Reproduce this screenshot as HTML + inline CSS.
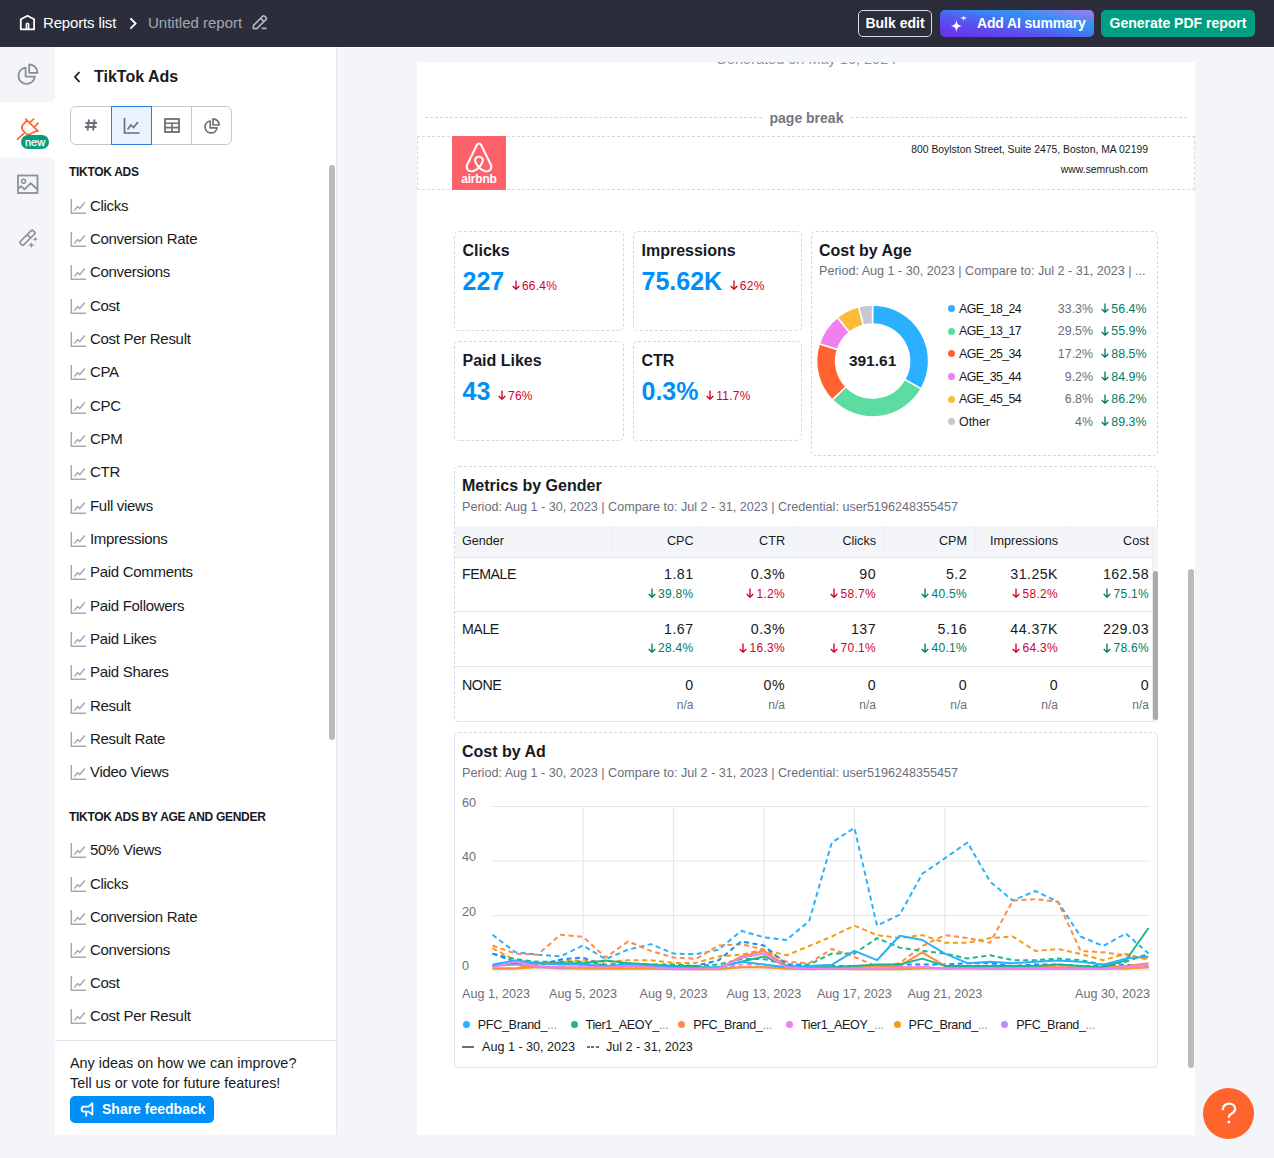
<!DOCTYPE html>
<html><head><meta charset="utf-8">
<style>
*{box-sizing:border-box;margin:0;padding:0}
html,body{width:1274px;height:1158px;overflow:hidden;background:#f4f5f9;font-family:"Liberation Sans",sans-serif;color:#171a22}
.abs{position:absolute}
#top{position:absolute;left:0;top:0;width:1274px;height:47px;background:#2b2e3a;z-index:5}
#rail{position:absolute;left:0;top:46px;width:55px;height:1112px;background:#f4f5f9}
#panel{position:absolute;left:55px;top:46px;width:282px;height:1089px;background:#fff;border-right:1px solid #e6e7ed}
.li{position:absolute;left:15px;height:20px;font-size:15px;line-height:20px;color:#171a22;white-space:nowrap;letter-spacing:-0.3px}
.li svg{position:absolute;left:0;top:2px}
.li span{position:absolute;left:20px;top:0}
.sech{position:absolute;left:14px;font-size:12px;font-weight:bold;color:#171a22;letter-spacing:-0.3px;white-space:nowrap}
#page{position:absolute;left:417px;top:62px;width:778px;height:1073px;background:#fff;overflow:hidden}
.card{position:absolute;border:1px dashed #d5d7df;border-radius:5px}
.ttl{position:absolute;font-size:16px;font-weight:bold;white-space:nowrap;color:#171a22}
.sub{position:absolute;font-size:13px;color:#6c6e79;white-space:nowrap}
.big{position:absolute;font-size:25px;font-weight:bold;color:#008ff8;white-space:nowrap}
.red{color:#d1002f}
.grn{color:#007c65}
.chg{position:absolute;font-size:12px;white-space:nowrap}
.t{position:absolute;white-space:nowrap}
</style></head><body>

<div id="top">
<svg class="abs" style="left:0;top:0" width="50" height="47" viewBox="0 0 50 47"><path d="M20.8 29.3V19.2L27.5 15.8L34.1 19.2V29.3Z" fill="none" stroke="#fff" stroke-width="1.8" stroke-linejoin="round"/><path d="M26.4 29.3V24.4a1.1 1.1 0 0 1 2.2 0V29.3" fill="none" stroke="#fff" stroke-width="1.6"/></svg>
<div class="t" style="left:43px;top:14px;font-size:15px;line-height:17px;color:#fff;letter-spacing:-0.15px">Reports list</div>
<svg class="abs" style="left:0;top:0" width="150" height="47" viewBox="0 0 150 47"><path d="M131 19L135.6 23.5L131 28" fill="none" stroke="#fff" stroke-width="1.8" stroke-linecap="square"/></svg>
<div class="t" style="left:148px;top:14px;font-size:15px;line-height:17px;color:#a4a7b3">Untitled report</div>
<svg class="abs" style="left:240px;top:0" width="40" height="47" viewBox="240 0 40 47"><path d="M253.3 28.5L253.5 25.4L262.8 16.1a1.2 1.2 0 0 1 1.7 0L266.1 17.7a1.2 1.2 0 0 1 0 1.7L256.8 28.7Z" fill="none" stroke="#b0b3c0" stroke-width="1.7" stroke-linejoin="round"/><path d="M260.7 18.3L264 21.6M261.6 28.4H266.6" fill="none" stroke="#b0b3c0" stroke-width="1.7"/></svg>
<div class="abs" style="left:858px;top:10px;width:74px;height:27px;border:1px solid #d9dbe3;border-radius:5px;color:#fff;font-size:14px;font-weight:bold;line-height:25px;text-align:center">Bulk edit</div>
<div class="abs" style="left:940px;top:10px;width:154px;height:27px;border-radius:5px;background:linear-gradient(to top right,#6a2ef0 0%,#5b50f0 35%,#3b82f2 58%,#3590f2 70%,#8a7eee 92%,#a878ec 100%);color:#fff;font-size:14px;letter-spacing:-0.15px;font-weight:bold;line-height:27px">
<svg class="abs" style="left:0;top:0" width="40" height="27" viewBox="0 0 40 27"><path d="M16.4 9.6C17 14 17.6 15.2 22.4 16.1 17.6 17 17 18.2 16.4 22.6 15.8 18.2 15.2 17 10.4 16.1 15.2 15.2 15.8 14 16.4 9.6z" fill="#fff"/><path d="M23.6 4.8C23.9 7.2 24.3 7.5 27.1 8.1 24.3 8.7 23.9 9 23.6 11.4 23.3 9 22.9 8.7 20.1 8.1 22.9 7.5 23.3 7.2 23.6 4.8z" fill="#fff"/></svg>
<span class="abs" style="left:37px;top:0">Add AI summary</span></div>
<div class="abs" style="left:1101px;top:10px;width:154px;height:27px;border-radius:5px;background:#009f81;color:#fff;font-size:14px;font-weight:bold;line-height:27px;text-align:center">Generate PDF report</div>
</div>
<div id="rail">
<div class="abs" style="left:0;top:40px;width:55px;height:90px;background:#fff"></div>
<div class="abs" style="left:0;top:0;width:55px;height:56px;background:#f4f5f9;border-bottom-right-radius:6px"></div>
<div class="abs" style="left:0;top:111px;width:55px;height:300px;background:#f4f5f9;border-top-right-radius:6px"></div>
<svg class="abs" style="left:0;top:0" width="55" height="60" viewBox="0 46 55 60"><path d="M25.6 67.6A8.2 8.2 0 1 0 34.8 76.6H25.6Z" fill="none" stroke="#8a8d99" stroke-width="1.8" stroke-linejoin="round"/><path d="M29.2 64.5V72.8H37.5A8.3 8.3 0 0 0 29.2 64.5Z" fill="none" stroke="#8a8d99" stroke-width="1.8" stroke-linejoin="round"/></svg>
<svg class="abs" style="left:10px;top:64px" width="45" height="45" viewBox="0 0 45 45"><path d="M15.8 9.2L28 21.2M16.8 10.4L12.6 15.2Q10.8 18 13 20.6L16 23.6Q18.4 25.4 21.2 23.4L27.4 20.4M19.8 12.6L23.6 9M24.4 17L28 13.2M7.4 29.4L13.4 23.8" fill="none" stroke="#ff642d" stroke-width="1.7" stroke-linecap="round" stroke-linejoin="round"/></svg>
<div class="abs" style="left:21px;top:89px;width:28px;height:14px;border-radius:7px;background:#009f81;color:#fff;font-size:11px;line-height:14px;text-align:center;-webkit-text-stroke:0.25px #fff">new</div>
<svg class="abs" style="left:0;top:0" width="55" height="300" viewBox="0 46 55 300"><rect x="18" y="175.5" width="19.5" height="17.5" fill="none" stroke="#8d909c" stroke-width="1.8"/><circle cx="23.6" cy="181.3" r="2" fill="none" stroke="#8d909c" stroke-width="1.5"/><path d="M18.2 188.6L21.2 186.2L24.4 189.3L30.6 183.3L37.4 189.2" fill="none" stroke="#8d909c" stroke-width="1.8" stroke-linejoin="round"/>
<path d="M20.3 243.3a1.3 1.3 0 0 1 0-1.8L31.2 230.6a1.3 1.3 0 0 1 1.8 0l1.6 1.6a1.3 1.3 0 0 1 0 1.8L23.7 244.9a1.3 1.3 0 0 1-1.8 0z M27.2 234.6l3.4 3.4" fill="none" stroke="#8d909c" stroke-width="1.7" stroke-linejoin="round"/>
<path d="M31.4 241.4c.4 2.6.9 3.1 3.6 3.7-2.7.6-3.2 1.1-3.6 3.7-.4-2.6-.9-3.1-3.6-3.7 2.7-.6 3.2-1.1 3.6-3.7zM35.3 236.6c.3 1.8.6 2.1 2.6 2.7-2 .6-2.3.9-2.6 2.7-.3-1.8-.6-2.1-2.6-2.7 2-.6 2.3-.9 2.6-2.7z" fill="#8d909c"/></svg>
</div>
<div id="panel">
<svg class="abs" style="left:17px;top:24px" width="10" height="14" viewBox="0 0 10 14"><path d="M7.5 2L3 7l4.5 5" fill="none" stroke="#171a22" stroke-width="1.8"/></svg>
<div class="t" style="left:39px;top:22px;font-size:16px;line-height:18px;font-weight:bold">TikTok Ads</div>
<div class="abs" style="left:15px;top:60px;width:162px;height:39px;border:1px solid #c4c7cf;border-radius:6px">
 <div class="abs" style="left:120px;top:0;width:1px;height:37px;background:#c4c7cf"></div>
 <div class="abs" style="left:39.5px;top:-1px;width:41.5px;height:39px;background:#e9f3fe;border:1.3px solid #2e7de0"></div>
 <svg class="abs" style="left:12px;top:10px" width="16" height="16" viewBox="0 0 16 16"><path d="M6 2.5L4.5 13.5M11.5 2.5L10 13.5M2.5 6h11.5M2 10h11.5" fill="none" stroke="#6c6e79" stroke-width="1.9"/></svg>
 <svg class="abs" style="left:52px;top:10px" width="18" height="18" viewBox="0 0 18 18"><path d="M1.5 1v15h15" fill="none" stroke="#6c6e79" stroke-width="1.7"/><path d="M4.5 12.5l3.5-4.5 2.5 2.5 4.5-5.5" fill="none" stroke="#6c6e79" stroke-width="1.7"/></svg>
 <svg class="abs" style="left:92px;top:10px" width="18" height="18" viewBox="0 0 18 18"><rect x="2" y="2" width="14" height="13" fill="none" stroke="#6c6e79" stroke-width="1.8"/><path d="M2 6.2h14M2 10.6h14M9 6.2V15" fill="none" stroke="#6c6e79" stroke-width="1.6"/></svg>
 <svg class="abs" style="left:132px;top:10px" width="18" height="18" viewBox="0 0 18 18"><path d="M7.2 4A6 6 0 1 0 14 10.8H7.2z" fill="none" stroke="#6c6e79" stroke-width="1.7" stroke-linejoin="round"/><path d="M10 1.8v6.2h6.2A6.2 6.2 0 0 0 10 1.8z" fill="none" stroke="#6c6e79" stroke-width="1.7" stroke-linejoin="round"/></svg>
</div>
<div class="sech" style="top:119px">TIKTOK ADS</div>
<div class="abs" style="left:274px;top:119px;width:6px;height:575px;border-radius:3px;background:#bbbbbd"></div>
<div class="li" style="top:149.5px"><svg width="17" height="17" viewBox="0 0 17 17"><path d="M1.3 1V15.3H16" fill="none" stroke="#a6a9b6" stroke-width="1.5"/><path d="M4.3 12.6L7.6 8.5L9.8 10.6L14.8 4.6" fill="none" stroke="#a6a9b6" stroke-width="1.5" stroke-linejoin="round"/></svg><span>Clicks</span></div>
<div class="li" style="top:182.8px"><svg width="17" height="17" viewBox="0 0 17 17"><path d="M1.3 1V15.3H16" fill="none" stroke="#a6a9b6" stroke-width="1.5"/><path d="M4.3 12.6L7.6 8.5L9.8 10.6L14.8 4.6" fill="none" stroke="#a6a9b6" stroke-width="1.5" stroke-linejoin="round"/></svg><span>Conversion Rate</span></div>
<div class="li" style="top:216.2px"><svg width="17" height="17" viewBox="0 0 17 17"><path d="M1.3 1V15.3H16" fill="none" stroke="#a6a9b6" stroke-width="1.5"/><path d="M4.3 12.6L7.6 8.5L9.8 10.6L14.8 4.6" fill="none" stroke="#a6a9b6" stroke-width="1.5" stroke-linejoin="round"/></svg><span>Conversions</span></div>
<div class="li" style="top:249.5px"><svg width="17" height="17" viewBox="0 0 17 17"><path d="M1.3 1V15.3H16" fill="none" stroke="#a6a9b6" stroke-width="1.5"/><path d="M4.3 12.6L7.6 8.5L9.8 10.6L14.8 4.6" fill="none" stroke="#a6a9b6" stroke-width="1.5" stroke-linejoin="round"/></svg><span>Cost</span></div>
<div class="li" style="top:282.8px"><svg width="17" height="17" viewBox="0 0 17 17"><path d="M1.3 1V15.3H16" fill="none" stroke="#a6a9b6" stroke-width="1.5"/><path d="M4.3 12.6L7.6 8.5L9.8 10.6L14.8 4.6" fill="none" stroke="#a6a9b6" stroke-width="1.5" stroke-linejoin="round"/></svg><span>Cost Per Result</span></div>
<div class="li" style="top:316.1px"><svg width="17" height="17" viewBox="0 0 17 17"><path d="M1.3 1V15.3H16" fill="none" stroke="#a6a9b6" stroke-width="1.5"/><path d="M4.3 12.6L7.6 8.5L9.8 10.6L14.8 4.6" fill="none" stroke="#a6a9b6" stroke-width="1.5" stroke-linejoin="round"/></svg><span>CPA</span></div>
<div class="li" style="top:349.5px"><svg width="17" height="17" viewBox="0 0 17 17"><path d="M1.3 1V15.3H16" fill="none" stroke="#a6a9b6" stroke-width="1.5"/><path d="M4.3 12.6L7.6 8.5L9.8 10.6L14.8 4.6" fill="none" stroke="#a6a9b6" stroke-width="1.5" stroke-linejoin="round"/></svg><span>CPC</span></div>
<div class="li" style="top:382.8px"><svg width="17" height="17" viewBox="0 0 17 17"><path d="M1.3 1V15.3H16" fill="none" stroke="#a6a9b6" stroke-width="1.5"/><path d="M4.3 12.6L7.6 8.5L9.8 10.6L14.8 4.6" fill="none" stroke="#a6a9b6" stroke-width="1.5" stroke-linejoin="round"/></svg><span>CPM</span></div>
<div class="li" style="top:416.1px"><svg width="17" height="17" viewBox="0 0 17 17"><path d="M1.3 1V15.3H16" fill="none" stroke="#a6a9b6" stroke-width="1.5"/><path d="M4.3 12.6L7.6 8.5L9.8 10.6L14.8 4.6" fill="none" stroke="#a6a9b6" stroke-width="1.5" stroke-linejoin="round"/></svg><span>CTR</span></div>
<div class="li" style="top:449.5px"><svg width="17" height="17" viewBox="0 0 17 17"><path d="M1.3 1V15.3H16" fill="none" stroke="#a6a9b6" stroke-width="1.5"/><path d="M4.3 12.6L7.6 8.5L9.8 10.6L14.8 4.6" fill="none" stroke="#a6a9b6" stroke-width="1.5" stroke-linejoin="round"/></svg><span>Full views</span></div>
<div class="li" style="top:482.8px"><svg width="17" height="17" viewBox="0 0 17 17"><path d="M1.3 1V15.3H16" fill="none" stroke="#a6a9b6" stroke-width="1.5"/><path d="M4.3 12.6L7.6 8.5L9.8 10.6L14.8 4.6" fill="none" stroke="#a6a9b6" stroke-width="1.5" stroke-linejoin="round"/></svg><span>Impressions</span></div>
<div class="li" style="top:516.1px"><svg width="17" height="17" viewBox="0 0 17 17"><path d="M1.3 1V15.3H16" fill="none" stroke="#a6a9b6" stroke-width="1.5"/><path d="M4.3 12.6L7.6 8.5L9.8 10.6L14.8 4.6" fill="none" stroke="#a6a9b6" stroke-width="1.5" stroke-linejoin="round"/></svg><span>Paid Comments</span></div>
<div class="li" style="top:549.5px"><svg width="17" height="17" viewBox="0 0 17 17"><path d="M1.3 1V15.3H16" fill="none" stroke="#a6a9b6" stroke-width="1.5"/><path d="M4.3 12.6L7.6 8.5L9.8 10.6L14.8 4.6" fill="none" stroke="#a6a9b6" stroke-width="1.5" stroke-linejoin="round"/></svg><span>Paid Followers</span></div>
<div class="li" style="top:582.8px"><svg width="17" height="17" viewBox="0 0 17 17"><path d="M1.3 1V15.3H16" fill="none" stroke="#a6a9b6" stroke-width="1.5"/><path d="M4.3 12.6L7.6 8.5L9.8 10.6L14.8 4.6" fill="none" stroke="#a6a9b6" stroke-width="1.5" stroke-linejoin="round"/></svg><span>Paid Likes</span></div>
<div class="li" style="top:616.1px"><svg width="17" height="17" viewBox="0 0 17 17"><path d="M1.3 1V15.3H16" fill="none" stroke="#a6a9b6" stroke-width="1.5"/><path d="M4.3 12.6L7.6 8.5L9.8 10.6L14.8 4.6" fill="none" stroke="#a6a9b6" stroke-width="1.5" stroke-linejoin="round"/></svg><span>Paid Shares</span></div>
<div class="li" style="top:649.5px"><svg width="17" height="17" viewBox="0 0 17 17"><path d="M1.3 1V15.3H16" fill="none" stroke="#a6a9b6" stroke-width="1.5"/><path d="M4.3 12.6L7.6 8.5L9.8 10.6L14.8 4.6" fill="none" stroke="#a6a9b6" stroke-width="1.5" stroke-linejoin="round"/></svg><span>Result</span></div>
<div class="li" style="top:682.8px"><svg width="17" height="17" viewBox="0 0 17 17"><path d="M1.3 1V15.3H16" fill="none" stroke="#a6a9b6" stroke-width="1.5"/><path d="M4.3 12.6L7.6 8.5L9.8 10.6L14.8 4.6" fill="none" stroke="#a6a9b6" stroke-width="1.5" stroke-linejoin="round"/></svg><span>Result Rate</span></div>
<div class="li" style="top:716.1px"><svg width="17" height="17" viewBox="0 0 17 17"><path d="M1.3 1V15.3H16" fill="none" stroke="#a6a9b6" stroke-width="1.5"/><path d="M4.3 12.6L7.6 8.5L9.8 10.6L14.8 4.6" fill="none" stroke="#a6a9b6" stroke-width="1.5" stroke-linejoin="round"/></svg><span>Video Views</span></div>
<div class="li" style="top:794.3px"><svg width="17" height="17" viewBox="0 0 17 17"><path d="M1.3 1V15.3H16" fill="none" stroke="#a6a9b6" stroke-width="1.5"/><path d="M4.3 12.6L7.6 8.5L9.8 10.6L14.8 4.6" fill="none" stroke="#a6a9b6" stroke-width="1.5" stroke-linejoin="round"/></svg><span>50% Views</span></div>
<div class="li" style="top:827.5px"><svg width="17" height="17" viewBox="0 0 17 17"><path d="M1.3 1V15.3H16" fill="none" stroke="#a6a9b6" stroke-width="1.5"/><path d="M4.3 12.6L7.6 8.5L9.8 10.6L14.8 4.6" fill="none" stroke="#a6a9b6" stroke-width="1.5" stroke-linejoin="round"/></svg><span>Clicks</span></div>
<div class="li" style="top:860.7px"><svg width="17" height="17" viewBox="0 0 17 17"><path d="M1.3 1V15.3H16" fill="none" stroke="#a6a9b6" stroke-width="1.5"/><path d="M4.3 12.6L7.6 8.5L9.8 10.6L14.8 4.6" fill="none" stroke="#a6a9b6" stroke-width="1.5" stroke-linejoin="round"/></svg><span>Conversion Rate</span></div>
<div class="li" style="top:893.9px"><svg width="17" height="17" viewBox="0 0 17 17"><path d="M1.3 1V15.3H16" fill="none" stroke="#a6a9b6" stroke-width="1.5"/><path d="M4.3 12.6L7.6 8.5L9.8 10.6L14.8 4.6" fill="none" stroke="#a6a9b6" stroke-width="1.5" stroke-linejoin="round"/></svg><span>Conversions</span></div>
<div class="li" style="top:927.1px"><svg width="17" height="17" viewBox="0 0 17 17"><path d="M1.3 1V15.3H16" fill="none" stroke="#a6a9b6" stroke-width="1.5"/><path d="M4.3 12.6L7.6 8.5L9.8 10.6L14.8 4.6" fill="none" stroke="#a6a9b6" stroke-width="1.5" stroke-linejoin="round"/></svg><span>Cost</span></div>
<div class="li" style="top:960.3px"><svg width="17" height="17" viewBox="0 0 17 17"><path d="M1.3 1V15.3H16" fill="none" stroke="#a6a9b6" stroke-width="1.5"/><path d="M4.3 12.6L7.6 8.5L9.8 10.6L14.8 4.6" fill="none" stroke="#a6a9b6" stroke-width="1.5" stroke-linejoin="round"/></svg><span>Cost Per Result</span></div>
<div class="sech" style="top:764px">TIKTOK ADS BY AGE AND GENDER</div>
<div class="abs" style="left:0;top:994px;width:281px;height:1px;background:#e0e1e9"></div>
<div class="t" style="left:15px;top:1007px;font-size:14.4px;line-height:20px">Any ideas on how we can improve?<br>Tell us or vote for future features!</div>
<div class="abs" style="left:15px;top:1050px;width:144px;height:27px;border-radius:5px;background:#008ff8;color:#fff;font-size:14px;font-weight:bold;line-height:27px">
<svg class="abs" style="left:0;top:0" width="30" height="27" viewBox="70 1096 30 27"><path d="M92.4 1103.2V1114.6L88.6 1111.6H83.6Q81.6 1111.4 81.6 1109.2Q81.6 1106.8 84 1106.6H88.4Z" fill="none" stroke="#fff" stroke-width="1.8" stroke-linejoin="round"/><path d="M86.2 1111.6V1116.6" fill="none" stroke="#fff" stroke-width="1.8"/></svg>
<span class="abs" style="left:32px;top:0">Share feedback</span></div>
</div>
<div id="page">
<div class="t" style="left:189.0px;width:400px;text-align:center;top:-10.3px;font-size:14.5px;line-height:14.5px;color:#8f929c;font-weight:normal;">Generated on May 16, 2024</div>
<div class="abs" style="left:8px;top:55px;width:337px;height:0;border-top:1px dashed #d3d5db"></div>
<div class="abs" style="left:434px;top:55px;width:336px;height:0;border-top:1px dashed #d3d5db"></div>
<div class="t" style="left:352.5px;top:48.6px;font-size:14px;line-height:14px;color:#737682;font-weight:bold;">page break</div>
<div class="abs" style="left:0;top:74px;width:778px;height:54px;border:1px dashed #d6d8de"></div>
<div class="abs" style="left:35px;top:74px;width:54px;height:54px;background:#ff616b">
<svg class="abs" style="left:0;top:0" width="54" height="54" viewBox="0 0 54 54"><path transform="translate(27 7.5) scale(1.1 1.02) translate(-27 -8)" d="M27 31.5C24.2 28 23.5 25.8 23.5 24.5c0-2.2 1.6-3.6 3.5-3.6s3.5 1.4 3.5 3.6c0 1.3-.7 3.5-3.5 7zM27 31.5c-2.8 2.8-5 3.8-6.8 3.8-2.6 0-4.4-2-4.4-4.4 0-.8.2-1.6.6-2.5L25 9.6c.5-1 1.1-1.6 2-1.6s1.5.6 2 1.6l8.6 18.8c.4.9.6 1.7.6 2.5 0 2.4-1.8 4.4-4.4 4.4-1.8 0-4-1-6.8-3.8z" fill="none" stroke="#fff" stroke-width="1.9"/></svg>
<div class="t" style="left:0;width:54px;text-align:center;top:36px;font-size:12px;line-height:14px;color:#fff;font-weight:bold;letter-spacing:-0.2px">airbnb</div></div>
<div class="t" style="right:47.0px;top:83.2px;font-size:10.4px;line-height:10.4px;color:#171a22;font-weight:normal;text-align:right;">800 Boylston Street, Suite 2475, Boston, MA 02199</div>
<div class="t" style="right:47.0px;top:103.2px;font-size:10.4px;line-height:10.4px;color:#171a22;font-weight:normal;text-align:right;">www.semrush.com</div>
<div class="card" style="left:36.5px;top:168.5px;width:170.0px;height:100.5px;"></div>
<div class="t" style="left:45.5px;top:180.5px;font-size:16px;line-height:16px;color:#171a22;font-weight:bold;">Clicks</div>
<div class="t" style="left:45.5px;top:206.8px;font-size:25px;line-height:25px;color:#008ff8;font-weight:bold;">227<span style="font-size:12px;font-weight:normal;color:#d1002f;margin-left:7.5px;letter-spacing:0.25px"><svg width="8.0" height="10" viewBox="0 0 8 10" style="display:inline-block;vertical-align:baseline;margin-right:2.2px;position:relative;top:0.5px"><path d="M4 0.6V9.2M0.7 5.9L4 9.2L7.3 5.9" fill="none" stroke="#d1002f" stroke-width="1.35"/></svg>66.4%</span></div>
<div class="card" style="left:215.5px;top:168.5px;width:169.0px;height:100.5px;"></div>
<div class="t" style="left:224.5px;top:180.5px;font-size:16px;line-height:16px;color:#171a22;font-weight:bold;">Impressions</div>
<div class="t" style="left:224.5px;top:206.8px;font-size:25px;line-height:25px;color:#008ff8;font-weight:bold;">75.62K<span style="font-size:12px;font-weight:normal;color:#d1002f;margin-left:7.5px;letter-spacing:0.25px"><svg width="8.0" height="10" viewBox="0 0 8 10" style="display:inline-block;vertical-align:baseline;margin-right:2.2px;position:relative;top:0.5px"><path d="M4 0.6V9.2M0.7 5.9L4 9.2L7.3 5.9" fill="none" stroke="#d1002f" stroke-width="1.35"/></svg>62%</span></div>
<div class="card" style="left:36.5px;top:278.5px;width:170.0px;height:100.5px;"></div>
<div class="t" style="left:45.5px;top:290.5px;font-size:16px;line-height:16px;color:#171a22;font-weight:bold;">Paid Likes</div>
<div class="t" style="left:45.5px;top:316.8px;font-size:25px;line-height:25px;color:#008ff8;font-weight:bold;">43<span style="font-size:12px;font-weight:normal;color:#d1002f;margin-left:7.5px;letter-spacing:0.25px"><svg width="8.0" height="10" viewBox="0 0 8 10" style="display:inline-block;vertical-align:baseline;margin-right:2.2px;position:relative;top:0.5px"><path d="M4 0.6V9.2M0.7 5.9L4 9.2L7.3 5.9" fill="none" stroke="#d1002f" stroke-width="1.35"/></svg>76%</span></div>
<div class="card" style="left:215.5px;top:278.5px;width:169.0px;height:100.5px;"></div>
<div class="t" style="left:224.5px;top:290.5px;font-size:16px;line-height:16px;color:#171a22;font-weight:bold;">CTR</div>
<div class="t" style="left:224.5px;top:316.8px;font-size:25px;line-height:25px;color:#008ff8;font-weight:bold;">0.3%<span style="font-size:12px;font-weight:normal;color:#d1002f;margin-left:7.5px;letter-spacing:0.25px"><svg width="8.0" height="10" viewBox="0 0 8 10" style="display:inline-block;vertical-align:baseline;margin-right:2.2px;position:relative;top:0.5px"><path d="M4 0.6V9.2M0.7 5.9L4 9.2L7.3 5.9" fill="none" stroke="#d1002f" stroke-width="1.35"/></svg>11.7%</span></div>
<div class="card" style="left:393.5px;top:168.5px;width:347.5px;height:225.5px;"></div>
<div class="t" style="left:402.0px;top:180.8px;font-size:16px;line-height:16px;color:#171a22;font-weight:bold;">Cost by Age</div>
<div class="t" style="left:402.0px;top:202.5px;font-size:12.6px;line-height:12.6px;color:#6c6e79;font-weight:normal;">Period: Aug 1 - 30, 2023 | Compare to: Jul 2 - 31, 2023 | ...</div>
<svg class="abs" style="left:0;top:0" width="778" height="1073"><path d="M455.60 243.00A56 56 0 0 1 504.16 326.90L487.68 317.43A37 37 0 0 0 455.60 262.00Z" fill="#2bb0ff" stroke="#fff" stroke-width="1.5"/><path d="M504.16 326.90A56 56 0 0 1 415.26 337.84L428.95 324.67A37 37 0 0 0 487.68 317.43Z" fill="#5cdca1" stroke="#fff" stroke-width="1.5"/><path d="M415.26 337.84A56 56 0 0 1 402.34 281.70L420.41 287.57A37 37 0 0 0 428.95 324.67Z" fill="#ff6430" stroke="#fff" stroke-width="1.5"/><path d="M402.34 281.70A56 56 0 0 1 420.45 255.41L432.38 270.20A37 37 0 0 0 420.41 287.57Z" fill="#f07ff0" stroke="#fff" stroke-width="1.5"/><path d="M420.45 255.41A56 56 0 0 1 441.67 244.76L446.40 263.16A37 37 0 0 0 432.38 270.20Z" fill="#fdbb3a" stroke="#fff" stroke-width="1.5"/><path d="M441.67 244.76A56 56 0 0 1 455.60 243.00L455.60 262.00A37 37 0 0 0 446.40 263.16Z" fill="#c5c8d0" stroke="#fff" stroke-width="1.5"/></svg>
<div class="t" style="left:255.6px;width:400px;text-align:center;top:291.4px;font-size:15.5px;line-height:15.5px;color:#171a22;font-weight:bold;">391.61</div>
<div class="abs" style="left:530.5px;top:243.1px;width:7px;height:7px;border-radius:50%;background:#2bb0ff"></div>
<div class="t" style="left:542.0px;top:240.7px;font-size:12.4px;line-height:12.4px;color:#171a22;font-weight:normal;letter-spacing:-0.6px">AGE_18_24</div>
<div class="t" style="right:102.0px;top:240.7px;font-size:12.4px;line-height:12.4px;color:#6c6e79;font-weight:normal;text-align:right;">33.3%</div>
<div class="t" style="right:48.5px;top:240.7px;font-size:12.4px;line-height:12.4px;color:#007c65;font-weight:normal;text-align:right;"><svg width="8.0" height="10" viewBox="0 0 8 10" style="display:inline-block;vertical-align:baseline;margin-right:2.2px;position:relative;top:0.5px"><path d="M4 0.6V9.2M0.7 5.9L4 9.2L7.3 5.9" fill="none" stroke="#007c65" stroke-width="1.35"/></svg>56.4%</div>
<div class="abs" style="left:530.5px;top:265.7px;width:7px;height:7px;border-radius:50%;background:#5cdca1"></div>
<div class="t" style="left:542.0px;top:263.3px;font-size:12.4px;line-height:12.4px;color:#171a22;font-weight:normal;letter-spacing:-0.6px">AGE_13_17</div>
<div class="t" style="right:102.0px;top:263.3px;font-size:12.4px;line-height:12.4px;color:#6c6e79;font-weight:normal;text-align:right;">29.5%</div>
<div class="t" style="right:48.5px;top:263.3px;font-size:12.4px;line-height:12.4px;color:#007c65;font-weight:normal;text-align:right;"><svg width="8.0" height="10" viewBox="0 0 8 10" style="display:inline-block;vertical-align:baseline;margin-right:2.2px;position:relative;top:0.5px"><path d="M4 0.6V9.2M0.7 5.9L4 9.2L7.3 5.9" fill="none" stroke="#007c65" stroke-width="1.35"/></svg>55.9%</div>
<div class="abs" style="left:530.5px;top:288.3px;width:7px;height:7px;border-radius:50%;background:#ff6430"></div>
<div class="t" style="left:542.0px;top:285.9px;font-size:12.4px;line-height:12.4px;color:#171a22;font-weight:normal;letter-spacing:-0.6px">AGE_25_34</div>
<div class="t" style="right:102.0px;top:285.9px;font-size:12.4px;line-height:12.4px;color:#6c6e79;font-weight:normal;text-align:right;">17.2%</div>
<div class="t" style="right:48.5px;top:285.9px;font-size:12.4px;line-height:12.4px;color:#007c65;font-weight:normal;text-align:right;"><svg width="8.0" height="10" viewBox="0 0 8 10" style="display:inline-block;vertical-align:baseline;margin-right:2.2px;position:relative;top:0.5px"><path d="M4 0.6V9.2M0.7 5.9L4 9.2L7.3 5.9" fill="none" stroke="#007c65" stroke-width="1.35"/></svg>88.5%</div>
<div class="abs" style="left:530.5px;top:310.9px;width:7px;height:7px;border-radius:50%;background:#f07ff0"></div>
<div class="t" style="left:542.0px;top:308.5px;font-size:12.4px;line-height:12.4px;color:#171a22;font-weight:normal;letter-spacing:-0.6px">AGE_35_44</div>
<div class="t" style="right:102.0px;top:308.5px;font-size:12.4px;line-height:12.4px;color:#6c6e79;font-weight:normal;text-align:right;">9.2%</div>
<div class="t" style="right:48.5px;top:308.5px;font-size:12.4px;line-height:12.4px;color:#007c65;font-weight:normal;text-align:right;"><svg width="8.0" height="10" viewBox="0 0 8 10" style="display:inline-block;vertical-align:baseline;margin-right:2.2px;position:relative;top:0.5px"><path d="M4 0.6V9.2M0.7 5.9L4 9.2L7.3 5.9" fill="none" stroke="#007c65" stroke-width="1.35"/></svg>84.9%</div>
<div class="abs" style="left:530.5px;top:333.5px;width:7px;height:7px;border-radius:50%;background:#fdbb3a"></div>
<div class="t" style="left:542.0px;top:331.1px;font-size:12.4px;line-height:12.4px;color:#171a22;font-weight:normal;letter-spacing:-0.6px">AGE_45_54</div>
<div class="t" style="right:102.0px;top:331.1px;font-size:12.4px;line-height:12.4px;color:#6c6e79;font-weight:normal;text-align:right;">6.8%</div>
<div class="t" style="right:48.5px;top:331.1px;font-size:12.4px;line-height:12.4px;color:#007c65;font-weight:normal;text-align:right;"><svg width="8.0" height="10" viewBox="0 0 8 10" style="display:inline-block;vertical-align:baseline;margin-right:2.2px;position:relative;top:0.5px"><path d="M4 0.6V9.2M0.7 5.9L4 9.2L7.3 5.9" fill="none" stroke="#007c65" stroke-width="1.35"/></svg>86.2%</div>
<div class="abs" style="left:530.5px;top:356.1px;width:7px;height:7px;border-radius:50%;background:#c5c8d0"></div>
<div class="t" style="left:542.0px;top:353.7px;font-size:12.4px;line-height:12.4px;color:#171a22;font-weight:normal;">Other</div>
<div class="t" style="right:102.0px;top:353.7px;font-size:12.4px;line-height:12.4px;color:#6c6e79;font-weight:normal;text-align:right;">4%</div>
<div class="t" style="right:48.5px;top:353.7px;font-size:12.4px;line-height:12.4px;color:#007c65;font-weight:normal;text-align:right;"><svg width="8.0" height="10" viewBox="0 0 8 10" style="display:inline-block;vertical-align:baseline;margin-right:2.2px;position:relative;top:0.5px"><path d="M4 0.6V9.2M0.7 5.9L4 9.2L7.3 5.9" fill="none" stroke="#007c65" stroke-width="1.35"/></svg>89.3%</div>
<div class="card" style="left:37.0px;top:403.5px;width:704.0px;height:256.5px;"></div>
<div class="t" style="left:45.0px;top:415.8px;font-size:16px;line-height:16px;color:#171a22;font-weight:bold;">Metrics by Gender</div>
<div class="t" style="left:45.0px;top:438.6px;font-size:12.6px;line-height:12.6px;color:#6c6e79;font-weight:normal;">Period: Aug 1 - 30, 2023 | Compare to: Jul 2 - 31, 2023 | Credential: user5196248355457</div>
<div class="abs" style="left:37.5px;top:464px;width:697.5px;height:31.5px;background:#f4f5f9;border-bottom:1px solid #e6e7ed"></div>
<div class="abs" style="left:193.6px;top:464px;width:1px;height:31px;background:#eff0f4"></div>
<div class="abs" style="left:284.0px;top:464px;width:1px;height:31px;background:#eff0f4"></div>
<div class="abs" style="left:375.5px;top:464px;width:1px;height:31px;background:#eff0f4"></div>
<div class="abs" style="left:467.0px;top:464px;width:1px;height:31px;background:#eff0f4"></div>
<div class="abs" style="left:558.0px;top:464px;width:1px;height:31px;background:#eff0f4"></div>
<div class="abs" style="left:649.0px;top:464px;width:1px;height:31px;background:#eff0f4"></div>
<div class="t" style="left:45.0px;top:472.8px;font-size:12.6px;line-height:12.6px;color:#171a22;font-weight:normal;">Gender</div>
<div class="t" style="right:501.5px;top:472.8px;font-size:12.6px;line-height:12.6px;color:#171a22;font-weight:normal;text-align:right;">CPC</div>
<div class="t" style="right:410.0px;top:472.8px;font-size:12.6px;line-height:12.6px;color:#171a22;font-weight:normal;text-align:right;">CTR</div>
<div class="t" style="right:319.0px;top:472.8px;font-size:12.6px;line-height:12.6px;color:#171a22;font-weight:normal;text-align:right;">Clicks</div>
<div class="t" style="right:228.0px;top:472.8px;font-size:12.6px;line-height:12.6px;color:#171a22;font-weight:normal;text-align:right;">CPM</div>
<div class="t" style="right:137.0px;top:472.8px;font-size:12.6px;line-height:12.6px;color:#171a22;font-weight:normal;text-align:right;">Impressions</div>
<div class="t" style="right:46.0px;top:472.8px;font-size:12.6px;line-height:12.6px;color:#171a22;font-weight:normal;text-align:right;">Cost</div>
<div class="t" style="left:45.0px;top:504.7px;font-size:14.2px;line-height:14.2px;color:#171a22;font-weight:normal;letter-spacing:-0.45px">FEMALE</div>
<div class="t" style="right:501.5px;top:504.7px;font-size:14.2px;line-height:14.2px;color:#171a22;font-weight:normal;text-align:right;letter-spacing:0.45px">1.81</div>
<div class="t" style="right:501.5px;top:525.6px;font-size:12px;line-height:12px;color:#007c65;font-weight:normal;text-align:right;letter-spacing:0.3px"><svg width="8.0" height="10" viewBox="0 0 8 10" style="display:inline-block;vertical-align:baseline;margin-right:2.2px;position:relative;top:0.5px"><path d="M4 0.6V9.2M0.7 5.9L4 9.2L7.3 5.9" fill="none" stroke="#007c65" stroke-width="1.35"/></svg>39.8%</div>
<div class="t" style="right:410.0px;top:504.7px;font-size:14.2px;line-height:14.2px;color:#171a22;font-weight:normal;text-align:right;letter-spacing:0.45px">0.3%</div>
<div class="t" style="right:410.0px;top:525.6px;font-size:12px;line-height:12px;color:#d1002f;font-weight:normal;text-align:right;letter-spacing:0.3px"><svg width="8.0" height="10" viewBox="0 0 8 10" style="display:inline-block;vertical-align:baseline;margin-right:2.2px;position:relative;top:0.5px"><path d="M4 0.6V9.2M0.7 5.9L4 9.2L7.3 5.9" fill="none" stroke="#d1002f" stroke-width="1.35"/></svg>1.2%</div>
<div class="t" style="right:319.0px;top:504.7px;font-size:14.2px;line-height:14.2px;color:#171a22;font-weight:normal;text-align:right;letter-spacing:0.45px">90</div>
<div class="t" style="right:319.0px;top:525.6px;font-size:12px;line-height:12px;color:#d1002f;font-weight:normal;text-align:right;letter-spacing:0.3px"><svg width="8.0" height="10" viewBox="0 0 8 10" style="display:inline-block;vertical-align:baseline;margin-right:2.2px;position:relative;top:0.5px"><path d="M4 0.6V9.2M0.7 5.9L4 9.2L7.3 5.9" fill="none" stroke="#d1002f" stroke-width="1.35"/></svg>58.7%</div>
<div class="t" style="right:228.0px;top:504.7px;font-size:14.2px;line-height:14.2px;color:#171a22;font-weight:normal;text-align:right;letter-spacing:0.45px">5.2</div>
<div class="t" style="right:228.0px;top:525.6px;font-size:12px;line-height:12px;color:#007c65;font-weight:normal;text-align:right;letter-spacing:0.3px"><svg width="8.0" height="10" viewBox="0 0 8 10" style="display:inline-block;vertical-align:baseline;margin-right:2.2px;position:relative;top:0.5px"><path d="M4 0.6V9.2M0.7 5.9L4 9.2L7.3 5.9" fill="none" stroke="#007c65" stroke-width="1.35"/></svg>40.5%</div>
<div class="t" style="right:137.0px;top:504.7px;font-size:14.2px;line-height:14.2px;color:#171a22;font-weight:normal;text-align:right;letter-spacing:0.45px">31.25K</div>
<div class="t" style="right:137.0px;top:525.6px;font-size:12px;line-height:12px;color:#d1002f;font-weight:normal;text-align:right;letter-spacing:0.3px"><svg width="8.0" height="10" viewBox="0 0 8 10" style="display:inline-block;vertical-align:baseline;margin-right:2.2px;position:relative;top:0.5px"><path d="M4 0.6V9.2M0.7 5.9L4 9.2L7.3 5.9" fill="none" stroke="#d1002f" stroke-width="1.35"/></svg>58.2%</div>
<div class="t" style="right:46.0px;top:504.7px;font-size:14.2px;line-height:14.2px;color:#171a22;font-weight:normal;text-align:right;letter-spacing:0.45px">162.58</div>
<div class="t" style="right:46.0px;top:525.6px;font-size:12px;line-height:12px;color:#007c65;font-weight:normal;text-align:right;letter-spacing:0.3px"><svg width="8.0" height="10" viewBox="0 0 8 10" style="display:inline-block;vertical-align:baseline;margin-right:2.2px;position:relative;top:0.5px"><path d="M4 0.6V9.2M0.7 5.9L4 9.2L7.3 5.9" fill="none" stroke="#007c65" stroke-width="1.35"/></svg>75.1%</div>
<div class="t" style="left:45.0px;top:559.6px;font-size:14.2px;line-height:14.2px;color:#171a22;font-weight:normal;letter-spacing:-0.45px">MALE</div>
<div class="t" style="right:501.5px;top:559.6px;font-size:14.2px;line-height:14.2px;color:#171a22;font-weight:normal;text-align:right;letter-spacing:0.45px">1.67</div>
<div class="t" style="right:501.5px;top:580.2px;font-size:12px;line-height:12px;color:#007c65;font-weight:normal;text-align:right;letter-spacing:0.3px"><svg width="8.0" height="10" viewBox="0 0 8 10" style="display:inline-block;vertical-align:baseline;margin-right:2.2px;position:relative;top:0.5px"><path d="M4 0.6V9.2M0.7 5.9L4 9.2L7.3 5.9" fill="none" stroke="#007c65" stroke-width="1.35"/></svg>28.4%</div>
<div class="t" style="right:410.0px;top:559.6px;font-size:14.2px;line-height:14.2px;color:#171a22;font-weight:normal;text-align:right;letter-spacing:0.45px">0.3%</div>
<div class="t" style="right:410.0px;top:580.2px;font-size:12px;line-height:12px;color:#d1002f;font-weight:normal;text-align:right;letter-spacing:0.3px"><svg width="8.0" height="10" viewBox="0 0 8 10" style="display:inline-block;vertical-align:baseline;margin-right:2.2px;position:relative;top:0.5px"><path d="M4 0.6V9.2M0.7 5.9L4 9.2L7.3 5.9" fill="none" stroke="#d1002f" stroke-width="1.35"/></svg>16.3%</div>
<div class="t" style="right:319.0px;top:559.6px;font-size:14.2px;line-height:14.2px;color:#171a22;font-weight:normal;text-align:right;letter-spacing:0.45px">137</div>
<div class="t" style="right:319.0px;top:580.2px;font-size:12px;line-height:12px;color:#d1002f;font-weight:normal;text-align:right;letter-spacing:0.3px"><svg width="8.0" height="10" viewBox="0 0 8 10" style="display:inline-block;vertical-align:baseline;margin-right:2.2px;position:relative;top:0.5px"><path d="M4 0.6V9.2M0.7 5.9L4 9.2L7.3 5.9" fill="none" stroke="#d1002f" stroke-width="1.35"/></svg>70.1%</div>
<div class="t" style="right:228.0px;top:559.6px;font-size:14.2px;line-height:14.2px;color:#171a22;font-weight:normal;text-align:right;letter-spacing:0.45px">5.16</div>
<div class="t" style="right:228.0px;top:580.2px;font-size:12px;line-height:12px;color:#007c65;font-weight:normal;text-align:right;letter-spacing:0.3px"><svg width="8.0" height="10" viewBox="0 0 8 10" style="display:inline-block;vertical-align:baseline;margin-right:2.2px;position:relative;top:0.5px"><path d="M4 0.6V9.2M0.7 5.9L4 9.2L7.3 5.9" fill="none" stroke="#007c65" stroke-width="1.35"/></svg>40.1%</div>
<div class="t" style="right:137.0px;top:559.6px;font-size:14.2px;line-height:14.2px;color:#171a22;font-weight:normal;text-align:right;letter-spacing:0.45px">44.37K</div>
<div class="t" style="right:137.0px;top:580.2px;font-size:12px;line-height:12px;color:#d1002f;font-weight:normal;text-align:right;letter-spacing:0.3px"><svg width="8.0" height="10" viewBox="0 0 8 10" style="display:inline-block;vertical-align:baseline;margin-right:2.2px;position:relative;top:0.5px"><path d="M4 0.6V9.2M0.7 5.9L4 9.2L7.3 5.9" fill="none" stroke="#d1002f" stroke-width="1.35"/></svg>64.3%</div>
<div class="t" style="right:46.0px;top:559.6px;font-size:14.2px;line-height:14.2px;color:#171a22;font-weight:normal;text-align:right;letter-spacing:0.45px">229.03</div>
<div class="t" style="right:46.0px;top:580.2px;font-size:12px;line-height:12px;color:#007c65;font-weight:normal;text-align:right;letter-spacing:0.3px"><svg width="8.0" height="10" viewBox="0 0 8 10" style="display:inline-block;vertical-align:baseline;margin-right:2.2px;position:relative;top:0.5px"><path d="M4 0.6V9.2M0.7 5.9L4 9.2L7.3 5.9" fill="none" stroke="#007c65" stroke-width="1.35"/></svg>78.6%</div>
<div class="t" style="left:45.0px;top:615.6px;font-size:14.2px;line-height:14.2px;color:#171a22;font-weight:normal;letter-spacing:-0.45px">NONE</div>
<div class="t" style="right:501.5px;top:615.6px;font-size:14.2px;line-height:14.2px;color:#171a22;font-weight:normal;text-align:right;letter-spacing:0.45px">0</div>
<div class="t" style="right:501.5px;top:636.8px;font-size:12px;line-height:12px;color:#6c6e79;font-weight:normal;text-align:right;">n/a</div>
<div class="t" style="right:410.0px;top:615.6px;font-size:14.2px;line-height:14.2px;color:#171a22;font-weight:normal;text-align:right;letter-spacing:0.45px">0%</div>
<div class="t" style="right:410.0px;top:636.8px;font-size:12px;line-height:12px;color:#6c6e79;font-weight:normal;text-align:right;">n/a</div>
<div class="t" style="right:319.0px;top:615.6px;font-size:14.2px;line-height:14.2px;color:#171a22;font-weight:normal;text-align:right;letter-spacing:0.45px">0</div>
<div class="t" style="right:319.0px;top:636.8px;font-size:12px;line-height:12px;color:#6c6e79;font-weight:normal;text-align:right;">n/a</div>
<div class="t" style="right:228.0px;top:615.6px;font-size:14.2px;line-height:14.2px;color:#171a22;font-weight:normal;text-align:right;letter-spacing:0.45px">0</div>
<div class="t" style="right:228.0px;top:636.8px;font-size:12px;line-height:12px;color:#6c6e79;font-weight:normal;text-align:right;">n/a</div>
<div class="t" style="right:137.0px;top:615.6px;font-size:14.2px;line-height:14.2px;color:#171a22;font-weight:normal;text-align:right;letter-spacing:0.45px">0</div>
<div class="t" style="right:137.0px;top:636.8px;font-size:12px;line-height:12px;color:#6c6e79;font-weight:normal;text-align:right;">n/a</div>
<div class="t" style="right:46.0px;top:615.6px;font-size:14.2px;line-height:14.2px;color:#171a22;font-weight:normal;text-align:right;letter-spacing:0.45px">0</div>
<div class="t" style="right:46.0px;top:636.8px;font-size:12px;line-height:12px;color:#6c6e79;font-weight:normal;text-align:right;">n/a</div>
<div class="abs" style="left:37.5px;top:548.6px;width:697.5px;height:1px;background:#e6e7ed"></div>
<div class="abs" style="left:37.5px;top:604.4px;width:697.5px;height:1px;background:#e6e7ed"></div>
<div class="abs" style="left:37.5px;top:659px;width:702.5px;height:1px;background:#e6e7ed"></div>
<div class="abs" style="left:734.5px;top:465px;width:6px;height:194px;background:#f4f5f9;border-left:1px solid #ebecf0"></div>
<div class="abs" style="left:735.5px;top:509px;width:5px;height:149px;border-radius:3px;background:#aaaaad"></div>
<div class="card" style="left:36.5px;top:669.5px;width:704.5px;height:336.5px;border-style:solid;border-color:#e3e4ea;border-top-style:dashed;border-top-color:#d5d7df"></div>
<div class="t" style="left:45.0px;top:682.3px;font-size:16px;line-height:16px;color:#171a22;font-weight:bold;">Cost by Ad</div>
<div class="t" style="left:45.0px;top:704.8px;font-size:12.6px;line-height:12.6px;color:#6c6e79;font-weight:normal;">Period: Aug 1 - 30, 2023 | Compare to: Jul 2 - 31, 2023 | Credential: user5196248355457</div>
<svg class="abs" style="left:0;top:0" width="778" height="1073">
<line x1="75.5" x2="733.0" y1="908.0" y2="908.0" stroke="#d9dbe2" stroke-width="1.2"/>
<line x1="75.5" x2="733.0" y1="853.5" y2="853.5" stroke="#e6e7ed" stroke-width="1.2"/>
<line x1="75.5" x2="733.0" y1="799.0" y2="799.0" stroke="#e6e7ed" stroke-width="1.2"/>
<line x1="75.5" x2="733.0" y1="744.5" y2="744.5" stroke="#e6e7ed" stroke-width="1.2"/>
<line x1="166.0" x2="166.0" y1="744.5" y2="908.0" stroke="#e6e7ed" stroke-width="1.2"/>
<line x1="256.5" x2="256.5" y1="744.5" y2="908.0" stroke="#e6e7ed" stroke-width="1.2"/>
<line x1="346.9" x2="346.9" y1="744.5" y2="908.0" stroke="#e6e7ed" stroke-width="1.2"/>
<line x1="437.4" x2="437.4" y1="744.5" y2="908.0" stroke="#e6e7ed" stroke-width="1.2"/>
<line x1="527.9" x2="527.9" y1="744.5" y2="908.0" stroke="#e6e7ed" stroke-width="1.2"/>
<polyline points="75.5,872.8 98.1,890.0 120.7,892.7 143.4,894.4 166.0,883.5 188.6,897.1 211.2,887.6 233.8,882.1 256.5,891.6 279.1,892.2 301.7,887.6 324.3,868.8 346.9,875.3 369.6,878.0 392.2,859.0 414.8,780.5 437.4,765.8 460.0,863.6 482.7,852.7 505.3,811.8 527.9,796.3 550.5,780.5 573.1,819.7 595.8,838.5 618.4,829.0 641.0,839.9 663.6,874.5 686.2,884.0 708.9,871.5 731.5,891.6" fill="none" stroke="#2bb0ff" stroke-width="2" stroke-dasharray="5 3.5" stroke-linejoin="round"/>
<polyline points="75.5,883.5 98.1,891.6 120.7,892.7 143.4,872.8 166.0,874.8 188.6,895.5 211.2,879.4 233.8,888.9 256.5,895.5 279.1,896.8 301.7,883.5 324.3,882.1 346.9,887.6 369.6,899.8 392.2,901.2 414.8,887.0 437.4,894.9 460.0,904.5 482.7,901.2 505.3,884.0 527.9,873.1 550.5,876.1 573.1,880.8 595.8,838.5 618.4,837.1 641.0,839.9 663.6,888.9 686.2,890.3 708.9,893.3 731.5,896.6" fill="none" stroke="#ff8c45" stroke-width="2" stroke-dasharray="5 3.5" stroke-linejoin="round"/>
<polyline points="75.5,886.2 98.1,898.2 120.7,900.9 143.4,899.6 166.0,898.2 188.6,899.8 211.2,898.2 233.8,898.2 256.5,900.9 279.1,900.9 301.7,894.4 324.3,892.7 346.9,887.6 369.6,893.3 392.2,884.0 414.8,874.5 437.4,863.6 460.0,873.1 482.7,876.1 505.3,873.1 527.9,880.8 550.5,880.8 573.1,876.1 595.8,874.5 618.4,888.9 641.0,887.0 663.6,891.9 686.2,898.2 708.9,891.9 731.5,898.2" fill="none" stroke="#f59c0f" stroke-width="2" stroke-dasharray="5 3.5" stroke-linejoin="round"/>
<polyline points="75.5,891.6 98.1,897.1 120.7,899.8 143.4,899.8 166.0,899.8 188.6,902.5 211.2,901.2 233.8,902.5 256.5,902.5 279.1,903.9 301.7,902.5 324.3,897.1 346.9,897.1 369.6,902.5 392.2,902.5 414.8,891.6 437.4,891.6 460.0,876.1 482.7,885.7 505.3,888.9 527.9,891.6 550.5,896.6 573.1,893.3 595.8,898.2 618.4,898.2 641.0,896.6 663.6,898.2 686.2,902.8 708.9,899.8 731.5,891.6" fill="none" stroke="#1cb88c" stroke-width="2" stroke-dasharray="5 3.5" stroke-linejoin="round"/>
<polyline points="75.5,891.6 98.1,899.8 120.7,903.4 143.4,897.6 166.0,895.5 188.6,904.7 211.2,903.9 233.8,903.9 256.5,903.9 279.1,903.9 301.7,898.2 324.3,879.4 346.9,883.5 369.6,902.5 392.2,903.9 414.8,903.9 437.4,903.9 460.0,903.9 482.7,902.5 505.3,902.5 527.9,902.5 550.5,901.2 573.1,901.2 595.8,903.9 618.4,902.5 641.0,902.5 663.6,903.9 686.2,903.9 708.9,902.5 731.5,905.3" fill="none" stroke="#1a8cff" stroke-width="2" stroke-dasharray="5 3.5" stroke-linejoin="round"/>
<polyline points="75.5,903.9 98.1,902.5 120.7,905.3 143.4,905.3 166.0,905.3 188.6,906.6 211.2,906.6 233.8,906.6 256.5,906.6 279.1,906.6 301.7,906.6 324.3,902.5 346.9,902.5 369.6,906.6 392.2,906.6 414.8,906.6 437.4,906.6 460.0,906.6 482.7,905.3 505.3,905.3 527.9,906.6 550.5,906.6 573.1,906.6 595.8,906.6 618.4,906.6 641.0,906.6 663.6,906.6 686.2,906.6 708.9,905.3 731.5,903.9" fill="none" stroke="#f07ff0" stroke-width="2" stroke-dasharray="5 3.5" stroke-linejoin="round"/>
<polyline points="75.5,903.9 98.1,902.5 120.7,905.3 143.4,906.6 166.0,906.6 188.6,906.6 211.2,906.6 233.8,906.6 256.5,907.2 279.1,907.2 301.7,906.6 324.3,905.3 346.9,905.3 369.6,906.6 392.2,907.2 414.8,906.6 437.4,906.6 460.0,906.6 482.7,906.6 505.3,905.3 527.9,906.6 550.5,906.6 573.1,906.6 595.8,906.6 618.4,906.6 641.0,906.6 663.6,906.6 686.2,906.6 708.9,906.6 731.5,905.3" fill="none" stroke="#c38cf5" stroke-width="2" stroke-linejoin="round"/>
<polyline points="75.5,906.6 98.1,906.6 120.7,905.3 143.4,905.3 166.0,906.6 188.6,906.6 211.2,906.6 233.8,906.6 256.5,906.6 279.1,907.2 301.7,907.2 324.3,905.3 346.9,905.3 369.6,906.6 392.2,906.6 414.8,906.6 437.4,907.2 460.0,907.2 482.7,907.2 505.3,906.6 527.9,906.6 550.5,905.3 573.1,906.6 595.8,906.6 618.4,906.6 641.0,906.6 663.6,906.6 686.2,906.6 708.9,906.6 731.5,905.3" fill="none" stroke="#f59c0f" stroke-width="2" stroke-linejoin="round"/>
<polyline points="75.5,906.6 98.1,906.6 120.7,901.2 143.4,901.2 166.0,902.5 188.6,905.3 211.2,903.9 233.8,905.3 256.5,906.6 279.1,906.6 301.7,906.6 324.3,894.4 346.9,888.9 369.6,903.9 392.2,905.3 414.8,905.3 437.4,905.3 460.0,903.9 482.7,903.9 505.3,890.3 527.9,903.9 550.5,905.3 573.1,906.6 595.8,905.3 618.4,903.9 641.0,905.3 663.6,905.3 686.2,905.3 708.9,903.9 731.5,901.2" fill="none" stroke="#ff8c45" stroke-width="2" stroke-linejoin="round"/>
<polyline points="75.5,903.9 98.1,901.2 120.7,901.2 143.4,901.2 166.0,901.2 188.6,898.5 211.2,901.2 233.8,902.5 256.5,903.9 279.1,905.3 301.7,905.3 324.3,899.8 346.9,894.4 369.6,903.9 392.2,905.3 414.8,905.3 437.4,903.9 460.0,902.5 482.7,902.5 505.3,896.6 527.9,903.9 550.5,903.9 573.1,903.9 595.8,903.9 618.4,903.9 641.0,902.5 663.6,903.9 686.2,905.3 708.9,898.2 731.5,866.0" fill="none" stroke="#1cb88c" stroke-width="2" stroke-linejoin="round"/>
<polyline points="75.5,902.5 98.1,898.5 120.7,901.2 143.4,902.5 166.0,902.5 188.6,903.9 211.2,902.5 233.8,903.9 256.5,905.3 279.1,906.6 301.7,905.3 324.3,899.8 346.9,902.5 369.6,905.3 392.2,903.9 414.8,902.8 437.4,888.9 460.0,898.2 482.7,873.7 505.3,878.0 527.9,891.6 550.5,901.2 573.1,899.8 595.8,901.2 618.4,899.8 641.0,898.5 663.6,899.8 686.2,902.8 708.9,896.6 731.5,894.4" fill="none" stroke="#2bb0ff" stroke-width="2" stroke-linejoin="round"/>
<polyline points="75.5,905.3 98.1,899.8 120.7,903.9 143.4,905.3 166.0,905.3 188.6,905.3 211.2,903.9 233.8,905.3 256.5,906.6 279.1,906.6 301.7,906.6 324.3,895.7 346.9,891.6 369.6,905.3 392.2,906.6 414.8,906.6 437.4,906.6 460.0,906.6 482.7,905.3 505.3,905.3 527.9,906.6 550.5,906.6 573.1,906.6 595.8,906.6 618.4,906.6 641.0,906.6 663.6,906.6 686.2,906.6 708.9,905.3 731.5,902.5" fill="none" stroke="#f07ff0" stroke-width="2" stroke-linejoin="round"/>
</svg>
<div class="t" style="left:45.0px;top:734.9px;font-size:12.6px;line-height:12.6px;color:#6c6e79;">60</div>
<div class="t" style="left:45.0px;top:789.4px;font-size:12.6px;line-height:12.6px;color:#6c6e79;">40</div>
<div class="t" style="left:45.0px;top:843.9px;font-size:12.6px;line-height:12.6px;color:#6c6e79;">20</div>
<div class="t" style="left:45.0px;top:897.9px;font-size:12.6px;line-height:12.6px;color:#6c6e79;">0</div>
<div class="t" style="left:45.0px;top:925.7px;font-size:12.6px;line-height:12.6px;color:#6c6e79;">Aug 1, 2023</div>
<div class="t" style="left:66.0px;width:200px;text-align:center;top:925.7px;font-size:12.6px;line-height:12.6px;color:#6c6e79">Aug 5, 2023</div>
<div class="t" style="left:156.5px;width:200px;text-align:center;top:925.7px;font-size:12.6px;line-height:12.6px;color:#6c6e79">Aug 9, 2023</div>
<div class="t" style="left:246.9px;width:200px;text-align:center;top:925.7px;font-size:12.6px;line-height:12.6px;color:#6c6e79">Aug 13, 2023</div>
<div class="t" style="left:337.4px;width:200px;text-align:center;top:925.7px;font-size:12.6px;line-height:12.6px;color:#6c6e79">Aug 17, 2023</div>
<div class="t" style="left:427.9px;width:200px;text-align:center;top:925.7px;font-size:12.6px;line-height:12.6px;color:#6c6e79">Aug 21, 2023</div>
<div class="t" style="right:45.0px;top:925.7px;font-size:12.6px;line-height:12.6px;color:#6c6e79">Aug 30, 2023</div>
<div class="abs" style="left:45.8px;top:959.2px;width:7px;height:7px;border-radius:50%;background:#2bb0ff"></div>
<div class="t" style="left:60.8px;top:956.6px;font-size:12.6px;line-height:12.6px;color:#171a22;letter-spacing:-0.35px">PFC_Brand_<span style="color:#8f929c">...</span></div>
<div class="abs" style="left:153.5px;top:959.2px;width:7px;height:7px;border-radius:50%;background:#1cb88c"></div>
<div class="t" style="left:168.5px;top:956.6px;font-size:12.6px;line-height:12.6px;color:#171a22;letter-spacing:-0.35px">Tier1_AEOY_<span style="color:#8f929c">...</span></div>
<div class="abs" style="left:261.2px;top:959.2px;width:7px;height:7px;border-radius:50%;background:#ff8c45"></div>
<div class="t" style="left:276.2px;top:956.6px;font-size:12.6px;line-height:12.6px;color:#171a22;letter-spacing:-0.35px">PFC_Brand_<span style="color:#8f929c">...</span></div>
<div class="abs" style="left:368.9px;top:959.2px;width:7px;height:7px;border-radius:50%;background:#f07ff0"></div>
<div class="t" style="left:383.9px;top:956.6px;font-size:12.6px;line-height:12.6px;color:#171a22;letter-spacing:-0.35px">Tier1_AEOY_<span style="color:#8f929c">...</span></div>
<div class="abs" style="left:476.6px;top:959.2px;width:7px;height:7px;border-radius:50%;background:#f59c0f"></div>
<div class="t" style="left:491.6px;top:956.6px;font-size:12.6px;line-height:12.6px;color:#171a22;letter-spacing:-0.35px">PFC_Brand_<span style="color:#8f929c">...</span></div>
<div class="abs" style="left:584.3px;top:959.2px;width:7px;height:7px;border-radius:50%;background:#c38cf5"></div>
<div class="t" style="left:599.3px;top:956.6px;font-size:12.6px;line-height:12.6px;color:#171a22;letter-spacing:-0.35px">PFC_Brand_<span style="color:#8f929c">...</span></div>
<div class="abs" style="left:45px;top:984.4000000000001px;width:12px;height:2px;background:#6c6e79"></div>
<div class="t" style="left:65.0px;top:979.3px;font-size:12.6px;line-height:12.6px;color:#171a22;">Aug 1 - 30, 2023</div>
<div class="abs" style="left:169.5px;top:984.4000000000001px;width:12px;height:2px;background:repeating-linear-gradient(90deg,#6c6e79 0 3px,transparent 3px 4.5px)"></div>
<div class="t" style="left:189.0px;top:979.3px;font-size:12.6px;line-height:12.6px;color:#171a22;">Jul 2 - 31, 2023</div>
</div><!--endpage-->
<div class="abs" style="left:1187.5px;top:569px;width:6px;height:499px;border-radius:3px;background:#bbbbbd"></div>
<div class="abs" style="left:1203.3px;top:1087.8px;width:51px;height:51px;border-radius:50%;background:#ff642d"><svg class="abs" style="left:0;top:0" width="51" height="51"><path d="M19.8 21.2C20.4 17.6 22.9 15.6 26 15.6C29.6 15.6 32.2 18 32.2 21C32.2 24.6 27.8 25.4 26.3 27.6C26 28 25.9 28.5 25.9 29" fill="none" stroke="#fff" stroke-width="2.3" stroke-linecap="round"/><circle cx="25.9" cy="33.9" r="1.5" fill="#fff"/></svg></div>
<div class="abs" style="left:337px;top:47px;width:937px;height:1px;background:#fff"></div>
<!--endextra-->

</body></html>
